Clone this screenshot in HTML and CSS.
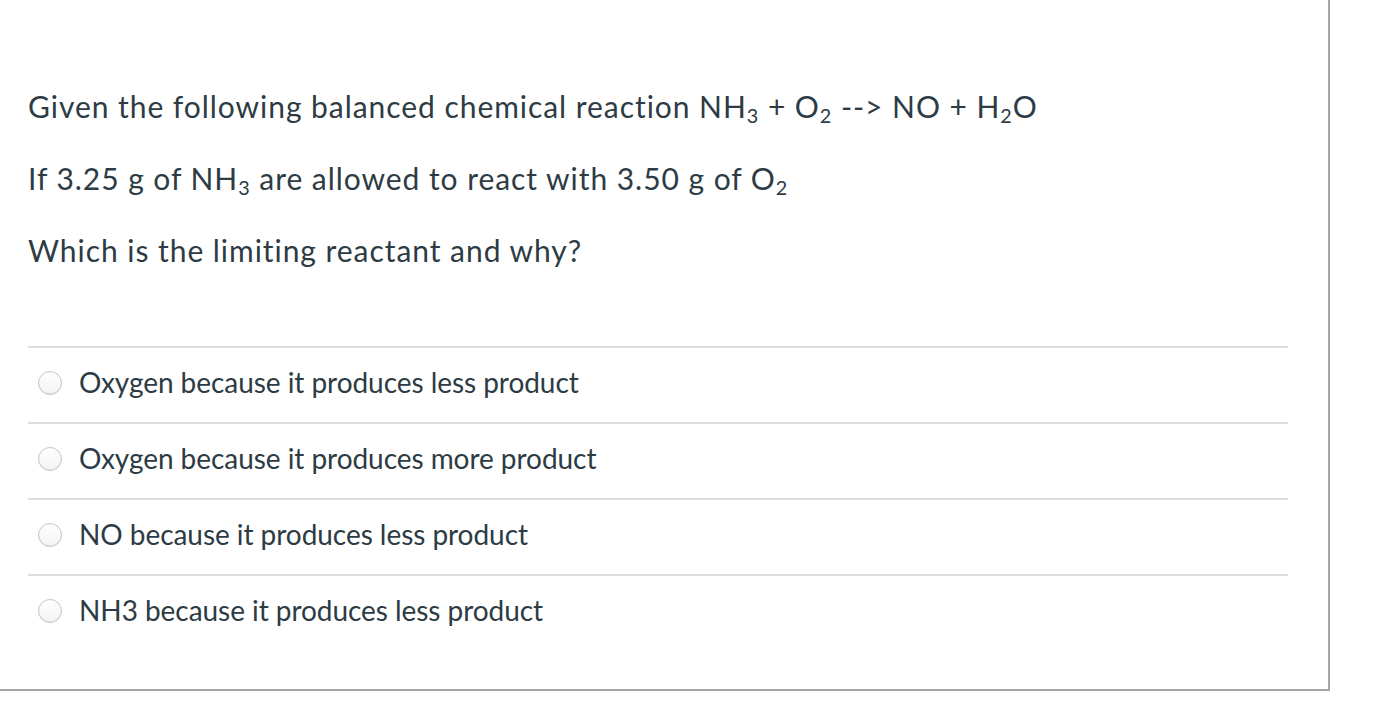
FILE: index.html
```html
<!DOCTYPE html>
<html>
<head>
<meta charset="utf-8">
<link rel="stylesheet" href="styles.css">
</head>
<body>
<div class="quiz">
  <div class="question">
    <p>Given the following balanced chemical reaction NH<sub>3</sub> + O<sub>2</sub> --&gt; NO + H<sub>2</sub>O</p>
    <p>If 3.25 g of NH<sub>3</sub> are allowed to react with 3.50 g of O<sub>2</sub></p>
    <p>Which is the limiting reactant and why?</p>
  </div>
  <div class="answers">
    <label class="answer"><span class="radio"></span><span class="text">Oxygen because it produces less product</span></label>
    <label class="answer"><span class="radio"></span><span class="text">Oxygen because it produces more product</span></label>
    <label class="answer"><span class="radio"></span><span class="text">NO because it produces less product</span></label>
    <label class="answer"><span class="radio"></span><span class="text">NH3 because it produces less product</span></label>
  </div>
</div>
</body>
</html>
```
FILE: styles.css
```css
html, body {
  margin: 0;
  padding: 0;
  background: #fff;
}
body {
  font-family: Lato, "Noto Sans", sans-serif;
  color: #2d3b45;
}
.quiz {
  width: 1330px;
  height: 691px;
  box-sizing: border-box;
  border-right: 2px solid #a5a5a5;
  border-bottom: 2px solid #a5a5a5;
  padding: 85px 40px 0 28px;
}
.question p {
  margin: 0 0 30px;
  font-size: 30px;
  line-height: 42px;
  letter-spacing: 0.95px;
}
.question p:last-child {
  margin-bottom: 0;
}
.question sub {
  font-size: 0.66em;
  line-height: 0;
  vertical-align: -5px;
}
.answers {
  margin-top: 75px;
}
.answer {
  display: flex;
  align-items: center;
  height: 74px;
  box-sizing: content-box;
  border-top: 2px solid #dddddd;
  padding-left: 10px;
  font-size: 28px;
}
.radio {
  width: 24px;
  height: 24px;
  box-sizing: border-box;
  border-radius: 50%;
  border: 1px solid #c4c4c4;
  background: linear-gradient(#ffffff, #f3f3f3);
  box-shadow: inset 0 -1px 1px rgba(0,0,0,0.06);
  margin-right: 17px;
  margin-bottom: 4px;
  flex: none;
}
.text {
  line-height: 32px;
  letter-spacing: -0.05px;
  margin-bottom: 6px;
}
```
